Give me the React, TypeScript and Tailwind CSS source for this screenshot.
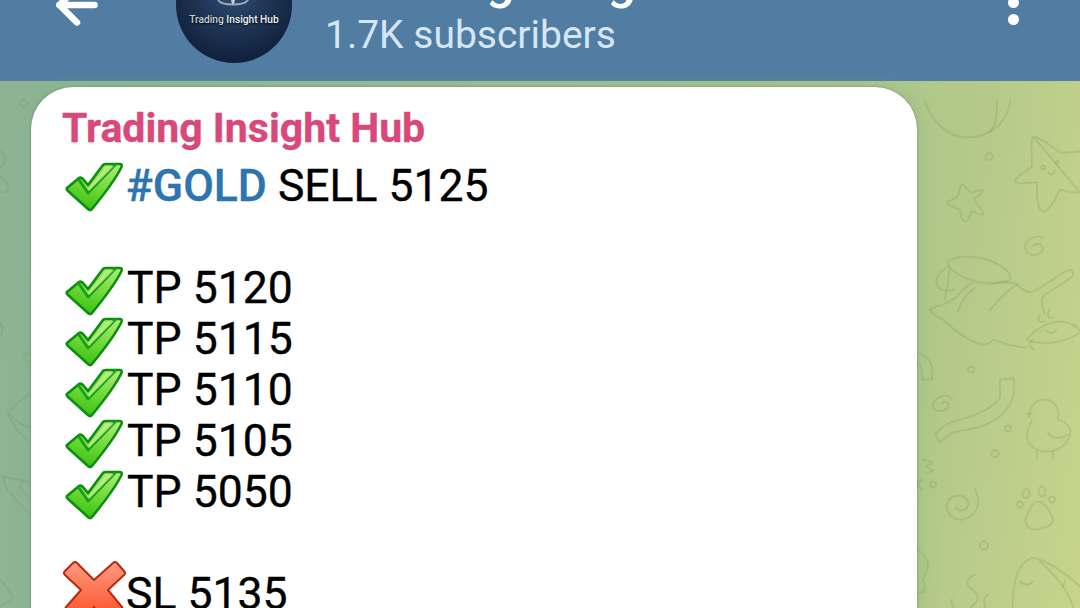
import * as React from "react"
import { ArrowLeft } from "lucide-react"

const targets = ["5120", "5115", "5110", "5105", "5050"]

function CheckMark({ id, className }: { id: string; className?: string }) {
  return (
    <svg viewBox="0 0 58 50" className={`w-[58px] h-[50px] shrink-0 ml-[3px] ${className ?? ""}`}>
      <defs>
        <linearGradient id={id} x1="0.75" y1="0" x2="0.4" y2="1">
          <stop offset="0" stopColor="#aeea74" />
          <stop offset="0.55" stopColor="#6cd836" />
          <stop offset="1" stopColor="#3cc012" />
        </linearGradient>
      </defs>
      <path
        d="M2 26 L14 16 Q16 15 18 17 L23 23 L38 3 Q39 2 41 2 L55 2 Q58 2 56 6 C50 18 36 36 27 47 Q25 49 23 47 L3 29 Q1 27 2 26 Z"
        fill={`url(#${id})`}
        stroke="#0c8f10"
        strokeWidth="2.6"
        strokeLinejoin="round"
      />
      <path
        d="M14 18 L23 31 L50 3"
        fill="none"
        stroke="#18a018"
        strokeWidth="2.8"
        strokeLinecap="round"
        strokeLinejoin="round"
      />
      <path d="M17 18 L23 26 L41 5 L49 4 L24 29 Z" fill="#b8ee84" fillOpacity="0.85" />
    </svg>
  )
}

function CrossMark() {
  return (
    <svg viewBox="0 0 64 60" className="w-[64px] h-[60px] shrink-0 -mt-[8px]">
      <defs>
        <linearGradient id="crs" x1="0" y1="0" x2="0" y2="1">
          <stop offset="0" stopColor="#ff9a80" />
          <stop offset="1" stopColor="#fb4f25" />
        </linearGradient>
      </defs>
      <path
        d="M11 2 Q13 0 15 2 L32 19 L51 2 Q53 0 55 2 L62 10 Q64 12 62 14 L46 29 L60 46 Q62 49 60 51 L52 59 L38 59 L32 46 L25 59 L12 59 L4 51 Q2 49 4 46 L19 29 L3 14 Q1 12 3 10 Z"
        fill="url(#crs)"
        stroke="#b62a12"
        strokeWidth="2"
        strokeLinejoin="round"
      />
    </svg>
  )
}

function Doodles() {
  return (
    <svg
      className="w-full h-full"
      viewBox="0 81 1080 527"
      fill="none"
      stroke="#6f8f55"
      strokeOpacity="0.22"
      strokeWidth="1.8"
      strokeLinecap="round"
      strokeLinejoin="round"
    >
      {/* ball */}
      <path d="M925 82 C932 104 950 118 967 118 C990 118 1008 102 1010 82" />
      <path d="M997 82 C998 94 996 104 990 113" />
      <circle cx="989" cy="137" r="3.5" />
      {/* starfish */}
      <path d="M1033 117 C1042 118 1052 128 1060 133 C1066 134 1074 132 1080 132 M1080 173 C1072 173 1066 172 1060 170 C1056 178 1050 192 1043 192 C1036 190 1037 172 1037 163 C1030 162 1020 166 1015 162 C1014 158 1026 152 1032 147 C1032 138 1030 120 1033 117 Z" />
      <circle cx="1043" cy="148" r="2" />
      <circle cx="1057" cy="143" r="1.5" />
      <path d="M1048 153 C1050 156 1054 155 1055 151" />
      {/* small star */}
      <path d="M962 165 C966 166 968 172 972 173 C976 173 983 169 983 171 C982 176 974 178 974 180 C976 185 985 192 983 195 C980 197 974 192 972 192 C970 195 968 202 965 202 C960 200 961 193 960 190 C955 188 947 186 947 183 C950 180 956 180 958 177 C959 172 960 165 962 165 Z" />
      <path d="M1043 218 C1033 214 1025 222 1025 228 C1026 236 1036 238 1042 232 C1045 226 1038 222 1034 226" />
      {/* jar lid and cat */}
      <path d="M948 242 C958 234 985 236 1000 246 C1006 250 1010 254 1010 257 C1012 262 1004 264 980 263 C965 260 946 250 948 242 Z" />
      <path d="M948 247 C940 252 934 258 937 266 C940 272 948 272 954 270 M950 248 L945 280" />
      <path d="M930 290 C938 286 950 284 957 277 C962 270 968 266 973 263 M990 265 C1000 262 1012 262 1017 265 C1024 272 1028 274 1032 272 C1045 268 1058 254 1070 250 C1074 252 1074 256 1072 257 C1062 266 1050 270 1043 277 C1040 284 1044 290 1045 295" />
      <path d="M930 290 C932 296 938 298 943 300 C955 312 970 322 983 325 C988 325 991 323 993 320 C1004 324 1016 328 1027 328" />
      <path d="M1017 265 C1005 272 998 282 990 290 M975 268 C966 274 960 284 958 292" />
      {/* crab */}
      <path d="M1027 320 C1034 310 1048 302 1062 302 C1072 304 1080 308 1080 313 C1068 322 1046 326 1032 322 Z" />
      <path d="M1046 311 C1050 315 1054 314 1056 310" />
      <path d="M1033 320 C1028 324 1030 328 1034 330 M1040 296 C1036 300 1040 304 1044 302 M1050 290 C1046 294 1048 300 1052 298" />
      {/* arc beside the card */}
      <path d="M917 333 C926 336 932 342 932 350 L932 360 L922 360 C922 350 922 346 917 343" />
      <circle cx="971" cy="350" r="3" />
      <path d="M952 380 C946 372 934 378 933 386 C934 394 944 392 948 388 C950 384 946 380 942 384" />
      {/* tube */}
      <path d="M1000 360 L1014 359 C1015 368 1014 372 1013 377 C1008 392 1000 398 990 403 C978 410 964 410 953 413 C947 416 943 420 940 423 L935 415 C940 409 944 406 950 403 C960 400 970 398 980 393 C992 388 1000 380 1000 377 Z" />
      <circle cx="1008" cy="409" r="3" />
      <circle cx="995" cy="434" r="3.5" />
      {/* chick */}
      <path d="M1029 398 C1030 386 1036 380 1044 380 C1054 380 1060 388 1058 400 C1066 402 1071 408 1070 413 C1070 424 1058 432 1047 432 C1034 432 1025 424 1027 414 C1028 408 1030 404 1032 401" />
      <path d="M1027 394 L1032 394 M1048 413 C1052 420 1062 420 1067 415 M1037 432 L1037 439 M1053 432 L1053 439" />
      {/* small scribbles */}
      <path d="M923 440 L933 443 L926 447 L933 451 L927 454 M922 460 L917 465 L922 470" />
      <circle cx="933" cy="465" r="3" />
      {/* big spiral */}
      <path d="M975 470 C982 482 978 496 963 500 C950 501 945 490 947 484 C950 476 962 472 968 482 C970 490 960 494 956 488" />
      {/* paw */}
      <path d="M1037 482 C1044 482 1050 490 1053 500 C1054 506 1042 510 1033 510 C1026 508 1024 502 1026 498 C1030 492 1030 484 1037 482 Z" />
      <ellipse cx="1026" cy="474" rx="3.5" ry="4.5" />
      <ellipse cx="1042" cy="472" rx="3.5" ry="5" />
      <circle cx="1052" cy="480" r="3" />
      <circle cx="1020" cy="485" r="3" />
      <circle cx="984" cy="526" r="4" />
      {/* bottom items */}
      <path d="M917 530 C924 534 928 540 928 547 C928 552 922 556 923 562 C926 566 925 572 922 573 L917 573" />
      <path d="M975 555 C968 558 966 562 968 566 C974 572 980 576 977 581 C974 587 968 590 965 592 M988 575 C982 578 984 583 985 586 C985 590 982 593 980 595 M952 580 C950 584 955 587 953 590 L950 593" />
      <path d="M1033 538 C1022 542 1016 552 1015 563 C1013 574 1012 584 1013 593 M1033 538 C1050 542 1070 558 1080 567 M1040 542 C1056 556 1068 572 1073 587 L1080 607" />
      <path d="M1020 562 C1024 566 1030 566 1033 562 M1065 562 L1063 567" />
      <path d="M935 600 C940 598 945 597 950 597 C965 597 980 602 990 607 M1007 595 C1022 597 1040 602 1053 607" />
      {/* left of the card */}
      <circle cx="24" cy="84" r="3.5" />
      <circle cx="115" cy="82" r="3" />
      <path d="M0 132 C4 132 6 138 4 143 L1 148" />
      <path d="M0 157 C4 160 8 164 8 168 C8 172 4 174 0 172" />
      <path d="M0 303 C3 306 3 312 2 315 L0 317" />
      <circle cx="28" cy="338" r="4" />
      <path d="M31 373 L8 392 C8 398 14 404 15 408 C20 414 26 420 31 422 M10 395 C14 400 20 406 31 408" />
      <path d="M3 457 L31 463 M3 457 C4 465 8 471 10 473 C16 480 24 490 31 495 M23 462 L20 468 L31 480" />
      <path d="M0 560 C6 566 10 572 13 578 C10 582 6 584 2 585" />
    </svg>
  )
}

export default function App() {
  return (
    <div className="w-[1080px] h-[608px] overflow-hidden flex flex-col font-['Roboto',sans-serif]">
      <header className="relative h-[81px] shrink-0 bg-[#527da3] flex overflow-hidden">
        <div className="ml-[48px] -mt-[25px] h-[40px]">
          <ArrowLeft size={60} strokeWidth={2.6} className="text-white -ml-[1px]" />
        </div>
        <div className="relative ml-[69px] -mt-[54px] w-[116px] h-[117px] shrink-0 rounded-full bg-[radial-gradient(circle_at_50%_40%,#2e4b72,#0e1c36_85%)] flex flex-col items-center justify-end pb-[37px]">
          <svg viewBox="0 0 34 10" className="absolute left-[40px] top-[53px] w-[34px] h-[10px]" fill="none">
            <path d="M2 1 C6 7 28 7 32 1" stroke="#9aa8b8" strokeWidth="2" />
            <path d="M15 1 L19 1 L18 5 L16 5 Z" fill="#c6ccd4" />
          </svg>
          <span className="text-[10.2px] leading-[12px] text-[#c9cfd6] font-medium whitespace-nowrap [text-shadow:0_1px_2px_#000]">
            Trading <span className="text-[#eef1f4]">Insight Hub</span>
          </span>
        </div>
        <div className="ml-[33px] -mt-[44px] flex flex-col">
          <span className="ml-[20px] text-[50px] leading-[51px] font-medium text-white whitespace-nowrap">Trading Insight Hub</span>
          <span className="text-[39px] leading-[40px] mt-[8px] text-[#d5e7f7] whitespace-nowrap">1.7K subscribers</span>
        </div>
        <div className="absolute right-[61px] top-0 flex flex-col gap-[6px] -mt-[3px]">
          <span className="w-[11px] h-[11px] rounded-full bg-white" />
          <span className="w-[11px] h-[11px] rounded-full bg-white" />
        </div>
      </header>
      <main className="relative flex-1 bg-[linear-gradient(97deg,#8db394_0%,#98ba96_30%,#b3c98a_85%,#c8d48a_100%)]">
        <div className="absolute inset-0">
          <Doodles />
        </div>
        <div className="relative ml-[31px] mt-[6px] w-[886px] h-[560px] bg-white rounded-t-[42px] pl-[31px] pt-[16px] shadow-[0_0_2px_rgba(60,80,60,0.6),0_0_20px_rgba(120,175,135,0.45)] text-[44.5px] leading-[51px] text-black [-webkit-text-stroke:0.35px_currentColor]">
          <div className="text-[41px] leading-[50px] mb-[8px] font-bold text-[#d9487a]">Trading Insight Hub</div>
          <div className="flex items-center h-[51px]">
            <CheckMark id="chk-head" />
            <span className="ml-[3px] text-[#2e75b0] font-medium">#GOLD</span>
            <span className="ml-[11px]">SELL 5125</span>
          </div>
          <div className="h-[51px]" />
          {targets.map((tp) => (
            <div key={tp} className="flex items-center h-[51px]">
              <CheckMark id={`chk-${tp}`} className="mt-[4px]" />
              <span className="ml-[4px]">TP {tp}</span>
            </div>
          ))}
          <div className="h-[51px]" />
          <div className="flex items-start h-[51px]">
            <CrossMark />
            <span>SL 5135</span>
          </div>
        </div>
      </main>
    </div>
  )
}
